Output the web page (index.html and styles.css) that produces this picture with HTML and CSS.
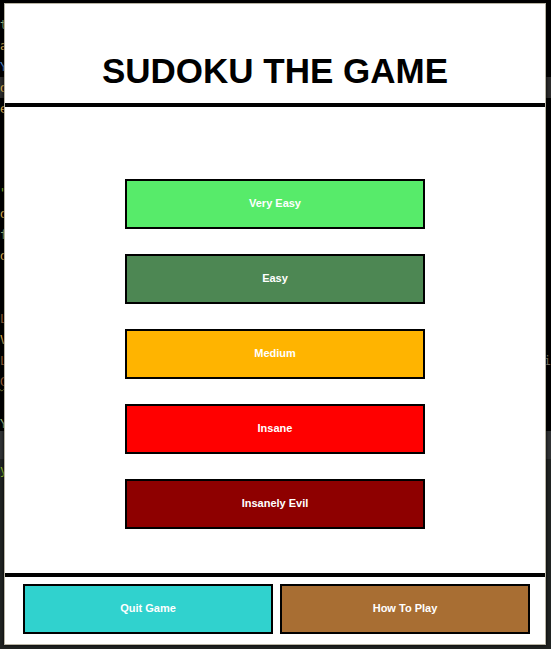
FILE: index.html
```html
<!DOCTYPE html>
<html lang="en">
<head>
<meta charset="utf-8">
<meta name="viewport" content="width=device-width, initial-scale=1">
<title>Sudoku The Game</title>
<link rel="stylesheet" href="styles.css">
</head>
<body>
<div class="editor" aria-hidden="true">
  <div class="code">
    <div class="line green">t</div>
    <div class="line gold">a</div>
    <div class="line blue">Y</div>
    <div class="line gold current">d</div>
    <div class="line gold">e</div>
    <div class="line"></div>
    <div class="line"></div>
    <div class="line"></div>
    <div class="line lime">"</div>
    <div class="line gold">d</div>
    <div class="line green">f</div>
    <div class="line gold">d</div>
    <div class="line"></div>
    <div class="line"></div>
    <div class="line rust">L</div>
    <div class="line gold">V</div>
    <div class="line rust">L<span class="muted">i</span></div>
    <div class="line rust warn">G</div>
    <div class="line"></div>
    <div class="line green">Y</div>
  </div>
  <div class="panel">
    <div class="tabs"></div>
    <div class="line lime">y</div>
  </div>
</div>
<main class="window">
  <header class="header"><h1 class="title">SUDOKU THE GAME</h1></header>
  <div class="levels">
    <button type="button" class="button very-easy">Very Easy</button>
    <button type="button" class="button easy">Easy</button>
    <button type="button" class="button medium">Medium</button>
    <button type="button" class="button insane">Insane</button>
    <button type="button" class="button evil">Insanely Evil</button>
  </div>
  <footer class="footer">
    <button type="button" class="button quit">Quit Game</button>
    <button type="button" class="button help">How To Play</button>
  </footer>
</main>
</body>
</html>
```
FILE: styles.css
```css
* {
  box-sizing: border-box;
}

body {
  position: relative;
  display: flex;
  min-height: 100vh;
  margin: 0;
  padding: 3px 5px 4px 4px;
  background: #000;
  font-family: "Liberation Sans", Arial, sans-serif;
}

/* Code editor behind the game window */
.editor {
  position: absolute;
  inset: 0;
  display: flex;
  flex-direction: column;
  overflow: hidden;
  font: 12px/23px "DejaVu Sans Mono", monospace;
}

.code {
  height: 431px;
  padding-top: 14px;
}

.line {
  display: flex;
  justify-content: space-between;
  height: 21px;
}

.current {
  background: #2b2b2b;
}

.green { color: #a8c080; }
.gold { color: #e0b050; }
.blue { color: #5890d8; }
.lime { color: #98c030; }
.rust { color: #a06038; }
.muted { color: #808078; }

.warn {
  text-decoration: underline wavy #777830 1px;
}

.panel {
  flex: 1;
  background: #202322;
}

.tabs {
  height: 28px;
  background: #303234;
}

/* Game window */
.window {
  position: relative;
  flex: 1;
  display: flex;
  flex-direction: column;
  border: 1px solid #b8b4a4;
  background: #fff;
  box-shadow: 0 0 3px #000;
}

.header {
  padding: 46px 0 12px;
  border-bottom: 4px solid #000;
}

.title {
  margin: 0;
  color: #000;
  font-size: 35px;
  line-height: 41px;
  text-align: center;
  white-space: nowrap;
}

.levels {
  flex: 1;
  display: flex;
  flex-direction: column;
  align-items: center;
  gap: 25px;
  padding: 72px 24px 44px;
}

.levels .button {
  width: 100%;
  max-width: 300px;
}

.button {
  height: 50px;
  padding: 0 0 2px;
  border: 2px solid #000;
  border-radius: 0;
  color: #fff;
  font: bold 11px/14px "Liberation Sans", Arial, sans-serif;
  cursor: pointer;
}

.very-easy { background: #57eb6a; }
.easy { background: #4d8753; }
.medium { background: #ffb400; }
.insane { background: #f00; }
.evil { background: #8e0000; }
.quit { background: #30d2ce; }
.help { background: #a86e33; }

.footer {
  display: flex;
  gap: 7px;
  padding: 7px 15px 10px 18px;
  border-top: 4px solid #000;
}

.footer .button {
  flex: 1;
}
```
